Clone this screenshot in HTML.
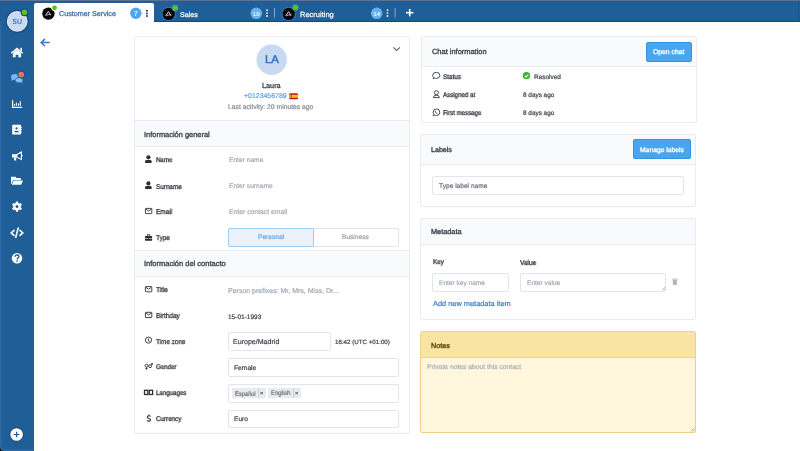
<!DOCTYPE html>
<html><head><meta charset="utf-8">
<style>
*{box-sizing:border-box;margin:0;padding:0}
html,body{width:800px;height:451px;overflow:hidden;background:#fff;font-family:"Liberation Sans",sans-serif}
.a{position:absolute}
.t{position:absolute;white-space:nowrap;line-height:1;text-rendering:geometricPrecision;will-change:transform}
#root{position:absolute;left:0;top:0;width:800px;height:451px;overflow:hidden;filter:blur(0.35px)}
</style></head><body><div id="root">
<div class="a" style="left:0px;top:0px;width:34px;height:451px;background:#1f5e96"></div>
<div class="a" style="left:34px;top:0px;width:766px;height:22px;background:#1f5e96;border-bottom:1px solid #0c4986"></div>
<div class="a" style="left:0px;top:0px;width:800px;height:1px;background:#5d7290"></div>
<div class="a" style="left:798px;top:1px;width:1px;height:21px;background:#19548f"></div>
<svg class="a" style="left:0;top:0" width="34" height="451" viewBox="0 0 34 451">
  <!-- avatar SU -->
  <circle cx="17.2" cy="21.4" r="11.4" fill="#15447a"/>
  <circle cx="17.2" cy="21.4" r="10.4" fill="#e3ecf8"/>
  <circle cx="17.2" cy="21.4" r="9.7" fill="#cddbef"/>
  <text x="17.2" y="23.7" text-anchor="middle" font-family="Liberation Sans" font-size="7.7" font-weight="bold" fill="#427cce" style="text-rendering:geometricPrecision" transform="translate(17.2 0) scale(0.93 1) translate(-17.2 0)">SU</text>
  <circle cx="24.5" cy="12.3" r="3.9" fill="#17487e"/>
  <circle cx="24.5" cy="12.3" r="2.8" fill="#5cc11c"/>
  <!-- home -->
  <g fill="#fff">
    <path d="M10.8 52.8 L17 47.6 L23.2 52.8 L22.3 53.8 L17 49.4 L11.7 53.8 Z"/>
    <rect x="20.4" y="47.8" width="1.6" height="3.2"/>
    <path d="M12.9 53 L17 49.7 L21.1 53 L21.1 57.2 L18.4 57.2 L18.4 54.8 L15.6 54.8 L15.6 57.2 L12.9 57.2 Z"/>
  </g>
  <!-- chat -->
  <g fill="#74b9f5">
    <ellipse cx="14.8" cy="77" rx="3.8" ry="3"/>
    <path d="M11.6 79 L11.1 81 L13.8 79.6 Z"/>
  </g>
  <g fill="#86c3f7" stroke="#1f5e96" stroke-width="0.7">
    <ellipse cx="19.1" cy="80.2" rx="3.9" ry="2.5"/>
  </g>
  <path d="M21.4 82 L22.9 83.4 L20.1 82.6 Z" fill="#86c3f7"/>
  <circle cx="21.2" cy="74.6" r="3.8" fill="#1a5189"/>
  <circle cx="21.2" cy="74.6" r="2.9" fill="#ef6f5b"/>
  <!-- chart -->
  <g fill="#fff">
    <rect x="12" y="100.2" width="1.2" height="7.8"/>
    <rect x="12" y="106.8" width="10.2" height="1.2"/>
    <rect x="14" y="104" width="1.05" height="1.8"/>
    <rect x="15.85" y="102.6" width="1.1" height="3.2"/>
    <rect x="18" y="103.4" width="1.05" height="2.4"/>
    <rect x="19.8" y="101.2" width="1.05" height="4.6"/>
  </g>
  <!-- address book -->
  <g fill="#fff">
    <rect x="12.2" y="124.8" width="8.8" height="9.6" rx="0.6"/>
    <rect x="21" y="126.7" width="1" height="1"/>
    <rect x="21" y="129.1" width="1" height="1"/>
    <rect x="21" y="131.5" width="1" height="1"/>
  </g>
  <circle cx="16.5" cy="128.4" r="1.05" fill="#1b4f8a"/>
  <rect x="14.6" y="130.9" width="4" height="1.4" fill="#1b4f8a"/>
  <!-- megaphone -->
  <g fill="#fff">
    <path d="M12 154.2 L16.4 154.2 L22 151 L22 160.2 L16.4 157.6 L12 157.6 Z"/>
    <path d="M14 157.4 L16.2 157.4 L16.2 160.4 L14.2 160.4 Z"/>
    <rect x="22" y="155" width="0.6" height="1.4"/>
  </g>
  <path d="M17.4 155 L20.8 153.2 L20.8 158.4 L17.4 156.8 Z" fill="#1b4f8a"/>
  <!-- folder -->
  <g fill="#fff">
    <path d="M11 176.8 L15.6 176.8 L16.4 177.9 L20.8 177.9 L20.8 180 L13.2 180 L11.4 184 L11 184 Z"/>
    <path d="M13.6 180.6 L23 180.6 L21.2 184.8 L11.8 184.8 Z"/>
  </g>
  <!-- gear -->
  <g fill="#fff">
    <circle cx="17" cy="206.6" r="3.8"/>
    <g transform="translate(17 206.6)">
      <rect x="-1.2" y="-5.1" width="2.4" height="10.2" rx="0.4"/>
      <rect x="-1.2" y="-5.1" width="2.4" height="10.2" rx="0.4" transform="rotate(60)"/>
      <rect x="-1.2" y="-5.1" width="2.4" height="10.2" rx="0.4" transform="rotate(120)"/>
    </g>
  </g>
  <circle cx="17" cy="206.6" r="1.4" fill="#1b4f8a"/>
  <!-- code -->
  <g fill="none" stroke="#fff" stroke-width="1.6" stroke-linecap="round" stroke-linejoin="miter">
    <path d="M14 230.4 L11.2 232.9 L14 235.4"/>
    <path d="M20 230.4 L22.8 232.9 L20 235.4"/>
    <path d="M18.2 228 L15.8 237.2"/>
  </g>
  <!-- question -->
  <circle cx="17" cy="258.2" r="5.2" fill="#fff"/>
  <path d="M15.1 256.8 Q15.2 254.8 17.1 254.8 Q19 254.9 18.9 256.6 Q18.8 257.6 17.8 258 Q17.2 258.3 17.2 259.4" fill="none" stroke="#1b4f8a" stroke-width="1.3"/>
  <circle cx="17.1" cy="261.1" r="0.8" fill="#1b4f8a"/>
  <!-- plus circle -->
  <circle cx="16.6" cy="434.5" r="7.2" fill="#17487e"/>
  <circle cx="16.6" cy="434.5" r="6.3" fill="#fff"/>
  <g stroke="#1f5e96" stroke-width="1.2">
    <line x1="13.8" y1="434.5" x2="19.4" y2="434.5"/>
    <line x1="16.6" y1="431.7" x2="16.6" y2="437.3"/>
  </g>
  <!-- window corner -->
  <path d="M0 446.5 L0 451 L4.5 451 Q0.4 450.8 0 446.5 Z" fill="#1e1a17"/>
  <path d="M0.9 22 L0.9 446.5 Q0.9 450 4.4 450 L34 450" fill="none" stroke="#3673b2" stroke-width="0.9"/>
</svg>

<div class="a" style="left:34px;top:3px;width:120px;height:20px;background:#fff;border-radius:2px 2px 0 0"></div>
<svg class="a" style="left:34px;top:0" width="400" height="22" viewBox="34 0 400 22">
  <defs>
    <g id="logo">
      <circle cx="0" cy="0" r="6.2" fill="#050505"/>
      <path d="M-3 1.9 L-0.1 -2.3 L2.3 1.5" fill="none" stroke="#d6d6d6" stroke-width="1"/>
      <path d="M-2.4 1.8 Q0 0.4 2.6 1.1" fill="none" stroke="#d6d6d6" stroke-width="0.8"/>
    </g>
  </defs>
  <!-- tab1 -->
  
  <use href="#logo" x="48.4" y="13.6"/>
  <circle cx="54.5" cy="7.8" r="3.3" fill="#fff"/>
  <circle cx="54.5" cy="7.8" r="2.4" fill="#5bc21d"/>
  <circle cx="135.85" cy="13.3" r="5.7" fill="#4fa7f1"/>
  <text x="135.9" y="15.9" text-anchor="middle" font-family="Liberation Sans" font-size="6.6" fill="#eef6fe" stroke="#eef6fe" stroke-width="0.2">7</text>
  <g fill="#0f2c6c"><circle cx="146.9" cy="10.7" r="0.95"/><circle cx="146.9" cy="13.4" r="0.95"/><circle cx="146.9" cy="16" r="0.95"/></g>
  <!-- tab2 -->
  <circle cx="168.7" cy="14" r="7.1" fill="#3d80c6"/>
  <use href="#logo" x="168.7" y="14"/>
  <circle cx="175.1" cy="8" r="3.4" fill="#3d80c6"/>
  <circle cx="175.1" cy="8" r="2.6" fill="#5bc21d"/>
  <circle cx="256.3" cy="13.3" r="5.8" fill="#64b2f2"/>
  <text x="256.3" y="15.6" text-anchor="middle" font-family="Liberation Sans" font-size="6.2" fill="#eef6fe" stroke="#eef6fe" stroke-width="0.15">10</text>
  <g fill="#fff"><circle cx="267" cy="10.2" r="0.9"/><circle cx="267" cy="13.1" r="0.9"/><circle cx="267" cy="16" r="0.9"/></g>
  <rect x="274" y="8" width="0.9" height="9.5" fill="#8fb0d4"/>
  <!-- tab3 -->
  <circle cx="288.7" cy="14" r="7.1" fill="#3d80c6"/>
  <use href="#logo" x="288.7" y="14"/>
  <circle cx="295.5" cy="7.6" r="3.4" fill="#3d80c6"/>
  <circle cx="295.5" cy="7.6" r="2.6" fill="#5bc21d"/>
  <circle cx="376.7" cy="13.3" r="5.8" fill="#64b2f2"/>
  <text x="376.7" y="15.6" text-anchor="middle" font-family="Liberation Sans" font-size="6.2" fill="#eef6fe" stroke="#eef6fe" stroke-width="0.15">14</text>
  <g fill="#fff"><circle cx="387.5" cy="10.2" r="0.9"/><circle cx="387.5" cy="13.1" r="0.9"/><circle cx="387.5" cy="16" r="0.9"/></g>
  <rect x="394.6" y="8" width="0.9" height="9.5" fill="#8fb0d4"/>
  <!-- plus -->
  <g stroke="#fff" stroke-width="1.6"><line x1="406" y1="12.7" x2="413.4" y2="12.7"/><line x1="409.7" y1="9" x2="409.7" y2="16.4"/></g>
</svg>
<svg class="a" style="left:38px;top:36px" width="14" height="14" viewBox="38 36 14 14">
  <g fill="none" stroke="#3b79c9" stroke-width="1.5" stroke-linecap="round" stroke-linejoin="round">
    <path d="M49.2 42.6 L41.4 42.6"/><path d="M44.5 39.4 L41.3 42.6 L44.5 45.8"/>
  </g>
</svg>
<div class="t" style="left:59.00px;top:11.43px;font-size:7.17px;-webkit-text-stroke:0.25px #3a6aa4;color:#3a6aa4;">Customer Service</div>
<div class="t" style="left:179.50px;top:11.99px;font-size:7.1px;-webkit-text-stroke:0.25px #f4f8fc;color:#f4f8fc;">Sales</div>
<div class="t" style="left:300.20px;top:11.35px;font-size:7.5px;-webkit-text-stroke:0.25px #f4f8fc;color:#f4f8fc;">Recruiting</div>
<div class="a" style="left:134px;top:36px;width:276px;height:398px;border:1px solid #e8ebf0;border-radius:2px;background:#fff"></div>
<svg class="a" style="left:134px;top:36px" width="276" height="398" viewBox="134 36 276 398">
  <circle cx="271.7" cy="59.8" r="15.2" fill="#c8daf2"/>
  <path d="M393.3 47.3 L396.6 50.5 L399.9 47.3" fill="none" stroke="#5b6370" stroke-width="1.1"/>
  <!-- flag -->
  <rect x="289.3" y="93.3" width="8.6" height="6" rx="0.6" fill="#c8102e"/>
  <rect x="289.3" y="94.8" width="8.6" height="3" fill="#f7c600"/>
  <rect x="290.7" y="95.2" width="1.3" height="2.1" fill="#b5541b"/>
</svg>
<svg class="a" style="left:134px;top:140px" width="30" height="290" viewBox="134 140 30 290">
  <g fill="#2b3037">
    <circle cx="148.4" cy="157.3" r="2.1"/>
    <path d="M145.1 162.9 L145.1 161.2 Q145.1 159.9 146.5 159.9 L150.3 159.9 Q151.6 159.9 151.6 161.2 L151.6 162.9 Z"/>
    <circle cx="148.4" cy="183.4" r="2.1"/>
    <path d="M145.1 189 L145.1 187.3 Q145.1 186 146.5 186 L150.3 186 Q151.6 186 151.6 187.3 L151.6 189 Z"/>
    <!-- briefcase -->
    <rect x="145" y="236" width="7.1" height="4.7" rx="0.5"/>
  </g>
  <rect x="147.3" y="234.7" width="2.5" height="1.6" fill="none" stroke="#2b3037" stroke-width="0.75"/>
  <rect x="145" y="238" width="7.1" height="0.55" fill="#fff"/>
  <rect x="148.15" y="237.7" width="0.8" height="1.2" fill="#2b3037"/>
  <g fill="none" stroke="#2b3037" stroke-width="0.9">
    <rect x="145.4" y="208.4" width="6.4" height="5.2" rx="0.5"/>
    <path d="M145.9 209.1 L148.6 211.1 L151.3 209.1"/>
    <rect x="145.4" y="286.6" width="6.4" height="5.2" rx="0.5"/>
    <path d="M145.9 287.3 L148.6 289.3 L151.3 287.3"/>
    <rect x="145.4" y="312.3" width="6.4" height="5.2" rx="0.5"/>
    <path d="M145.9 313 L148.6 315 L151.3 313"/>
    <!-- clock -->
    <circle cx="148.5" cy="340.1" r="3.1" stroke-width="0.9"/>
    <path d="M148.4 338.6 L148.4 340.9 L149.8 341.6" stroke-width="0.9"/>
    <!-- gender -->
    <circle cx="146.5" cy="365.7" r="1.5" stroke-width="0.9"/>
    <path d="M146.5 367.2 L146.5 369.6 M145.4 368.6 L147.6 368.6" stroke-width="0.9"/>
    <circle cx="150.1" cy="366.2" r="1.45" stroke-width="0.9"/>
    <path d="M151.1 365.2 L152.4 363.6 M151.1 363.5 L152.5 363.5 L152.5 364.9" stroke-width="0.8"/>
    <!-- languages -->
    <rect x="144.5" y="390.3" width="3.3" height="4.2" stroke-width="1.3"/>
    <rect x="149.3" y="390.3" width="3.3" height="4.2" stroke-width="1.3"/>
    <!-- dollar -->
    <path d="M150.6 416.4 Q150 415.7 148.8 415.7 Q147.3 415.7 147.3 417 Q147.3 418 148.9 418.4 Q150.6 418.8 150.6 419.9 Q150.6 421 148.9 421 Q147.6 421 147 420.3" stroke-width="1.05"/>
    <path d="M148.9 414.4 L148.9 415.7 M148.9 421 L148.9 422" stroke-width="0.9"/>
  </g>
</svg>

<div class="t" style="left:265.00px;top:55.15px;font-size:11.4px;-webkit-text-stroke:0.5px #3470c2;color:#3470c2;">LA</div>
<div class="t" style="left:262.30px;top:81.72px;font-size:7.3px;-webkit-text-stroke:0.26px #30353b;color:#30353b;">Laura</div>
<div class="t" style="left:244.00px;top:93.92px;font-size:6.95px;-webkit-text-stroke:0.2px #5aa2e5;color:#5aa2e5;">+0123456789</div>
<div class="t" style="left:227.50px;top:104.86px;font-size:6.78px;-webkit-text-stroke:0.2px #858b94;color:#858b94;">Last activity: 20 minutes ago</div>
<div class="a" style="left:134px;top:120px;width:276px;height:27px;background:#f9fafc;border:1px solid #e8ebf0"></div>
<div class="a" style="left:134px;top:250px;width:276px;height:27px;background:#f9fafc;border:1px solid #e8ebf0"></div>
<div class="t" style="left:144.00px;top:130.89px;font-size:7.45px;-webkit-text-stroke:0.36px #41464d;color:#41464d;">Información general</div>
<div class="t" style="left:144.00px;top:260.25px;font-size:7.5px;-webkit-text-stroke:0.36px #41464d;color:#41464d;">Información del contacto</div>
<div class="t" style="left:155.60px;top:157.87px;font-size:6.765px;-webkit-text-stroke:0.3px #30353c;color:#30353c;transform:scaleX(0.9091);transform-origin:0 0;">Name</div>
<div class="t" style="left:155.60px;top:183.84px;font-size:7.04px;-webkit-text-stroke:0.3px #30353c;color:#30353c;transform:scaleX(0.9091);transform-origin:0 0;">Surname</div>
<div class="t" style="left:155.60px;top:209.35px;font-size:7.15px;-webkit-text-stroke:0.3px #30353c;color:#30353c;transform:scaleX(0.9091);transform-origin:0 0;">Email</div>
<div class="t" style="left:155.60px;top:234.54px;font-size:7.04px;-webkit-text-stroke:0.3px #30353c;color:#30353c;transform:scaleX(0.9091);transform-origin:0 0;">Type</div>
<div class="t" style="left:155.60px;top:286.74px;font-size:7.04px;-webkit-text-stroke:0.3px #30353c;color:#30353c;transform:scaleX(0.9091);transform-origin:0 0;">Title</div>
<div class="t" style="left:155.60px;top:313.35px;font-size:7.15px;-webkit-text-stroke:0.3px #30353c;color:#30353c;transform:scaleX(0.9091);transform-origin:0 0;">Birthday</div>
<div class="t" style="left:155.60px;top:338.87px;font-size:7.007px;-webkit-text-stroke:0.3px #30353c;color:#30353c;transform:scaleX(0.9091);transform-origin:0 0;">Time zone</div>
<div class="t" style="left:155.60px;top:365.47px;font-size:6.765px;-webkit-text-stroke:0.3px #30353c;color:#30353c;transform:scaleX(0.9091);transform-origin:0 0;">Gender</div>
<div class="t" style="left:155.60px;top:391.16px;font-size:6.776px;-webkit-text-stroke:0.3px #30353c;color:#30353c;transform:scaleX(0.9091);transform-origin:0 0;">Languages</div>
<div class="t" style="left:155.60px;top:416.75px;font-size:6.908px;-webkit-text-stroke:0.3px #30353c;color:#30353c;transform:scaleX(0.9091);transform-origin:0 0;">Currency</div>
<div class="t" style="left:228.60px;top:157.97px;font-size:6.65px;-webkit-text-stroke:0.2px #a3aab4;color:#a3aab4;">Enter name</div>
<div class="t" style="left:228.60px;top:184.24px;font-size:6.68px;-webkit-text-stroke:0.2px #a3aab4;color:#a3aab4;">Enter surname</div>
<div class="t" style="left:228.60px;top:209.73px;font-size:6.82px;-webkit-text-stroke:0.2px #a3aab4;color:#a3aab4;">Enter contact email</div>
<div class="a" style="left:228px;top:228px;width:171px;height:19px;border:1px solid #e2e5e9;border-radius:2px;background:#fff"></div>
<div class="a" style="left:228px;top:228px;width:86px;height:19px;border:1px solid #9dccf1;border-radius:2px;background:#eaf3fc"></div>
<div class="t" style="left:258.00px;top:235.01px;font-size:6.6px;-webkit-text-stroke:0.2px #62a6e6;color:#62a6e6;">Personal</div>
<div class="t" style="left:342.30px;top:235.01px;font-size:6.6px;-webkit-text-stroke:0.2px #9ba1a9;color:#9ba1a9;">Business</div>
<div class="t" style="left:227.80px;top:288.27px;font-size:7.0px;-webkit-text-stroke:0.2px #a3aab4;color:#a3aab4;">Person prefixes: Mr, Mrs, Miss, Dr...</div>
<div class="t" style="left:227.80px;top:314.80px;font-size:6.5px;-webkit-text-stroke:0.2px #3d4249;color:#3d4249;">15-01-1993</div>
<div class="a" style="left:228px;top:332px;width:103px;height:19px;border:1px solid #e3e6ea;border-radius:2px;background:#fff"></div>
<div class="t" style="left:233.30px;top:338.61px;font-size:7.07px;-webkit-text-stroke:0.2px #3d4249;color:#3d4249;">Europe/Madrid</div>
<div class="t" style="left:334.50px;top:340.15px;font-size:6.2px;-webkit-text-stroke:0.2px #3d4249;color:#3d4249;">16:42 (UTC +01:00)</div>
<div class="a" style="left:228px;top:358px;width:171px;height:19px;border:1px solid #e3e6ea;border-radius:2px;background:#fff"></div>
<div class="t" style="left:234.10px;top:365.73px;font-size:6.7px;-webkit-text-stroke:0.2px #3d4249;color:#3d4249;">Female</div>
<div class="a" style="left:228px;top:384px;width:171px;height:19px;border:1px solid #e3e6ea;border-radius:2px;background:#fff"></div>
<div class="a" style="left:232px;top:388px;width:34px;height:10px;background:#e8eaed;border-radius:1px"></div>
<div class="a" style="left:258.2px;top:388px;width:0.8px;height:10px;background:#cdd1d6"></div>
<div class="a" style="left:268px;top:388px;width:33px;height:10px;background:#e8eaed;border-radius:1px"></div>
<div class="a" style="left:293.2px;top:388px;width:0.8px;height:10px;background:#cdd1d6"></div>
<div class="t" style="left:234.60px;top:391.59px;font-size:6.384px;-webkit-text-stroke:0.08px #50565d;color:#50565d;transform:scaleX(0.8929);transform-origin:0 0;">Español</div>
<div class="t" style="left:270.60px;top:391.41px;font-size:6.608px;-webkit-text-stroke:0.08px #50565d;color:#50565d;transform:scaleX(0.8929);transform-origin:0 0;">English</div>
<div class="t" style="left:260.30px;top:392.06px;font-size:5.6px;font-weight:bold;color:#3d4249;">×</div>
<div class="t" style="left:295.30px;top:392.06px;font-size:5.6px;font-weight:bold;color:#3d4249;">×</div>
<div class="a" style="left:228px;top:410px;width:171px;height:18px;border:1px solid #e3e6ea;border-radius:2px;background:#fff"></div>
<div class="t" style="left:234.10px;top:417.21px;font-size:6.6px;-webkit-text-stroke:0.2px #3d4249;color:#3d4249;">Euro</div>
<div class="a" style="left:421px;top:36px;width:276px;height:87px;border:1px solid #e8ebf0;border-radius:2px;background:#fff"></div>
<div class="a" style="left:422px;top:37px;width:274px;height:30px;background:#f9fafc;border-bottom:1px solid #e8ebf0"></div>
<div class="a" style="left:646px;top:42px;width:45.5px;height:19.5px;background:#49a6ee;border:1px solid #3593e3;border-radius:2px"></div>
<div class="t" style="left:652.90px;top:49.74px;font-size:6.8px;-webkit-text-stroke:0.3px #ffffff;color:#ffffff;">Open chat</div>
<div class="t" style="left:432.20px;top:48.29px;font-size:7.45px;-webkit-text-stroke:0.36px #3f444b;color:#3f444b;">Chat information</div>
<div class="t" style="left:443.40px;top:75.03px;font-size:6.93px;-webkit-text-stroke:0.3px #30353c;color:#30353c;transform:scaleX(0.9091);transform-origin:0 0;">Status</div>
<div class="t" style="left:443.40px;top:93.06px;font-size:6.776px;-webkit-text-stroke:0.3px #30353c;color:#30353c;transform:scaleX(0.9091);transform-origin:0 0;">Assigned at</div>
<div class="t" style="left:443.40px;top:111.29px;font-size:6.743px;-webkit-text-stroke:0.3px #30353c;color:#30353c;transform:scaleX(0.9091);transform-origin:0 0;">First message</div>
<div class="t" style="left:534.40px;top:75.44px;font-size:6.45px;-webkit-text-stroke:0.2px #3d4249;color:#3d4249;">Resolved</div>
<div class="t" style="left:522.90px;top:93.38px;font-size:6.4px;-webkit-text-stroke:0.2px #3d4249;color:#3d4249;">8 days ago</div>
<div class="t" style="left:522.90px;top:110.58px;font-size:6.4px;-webkit-text-stroke:0.2px #3d4249;color:#3d4249;">8 days ago</div>
<div class="a" style="left:420px;top:134px;width:276px;height:73px;border:1px solid #e8ebf0;border-radius:2px;background:#fff"></div>
<div class="a" style="left:421px;top:135px;width:274px;height:30px;background:#f9fafc;border-bottom:1px solid #e8ebf0"></div>
<div class="a" style="left:633px;top:139px;width:57.5px;height:20px;background:#49a6ee;border:1px solid #3593e3;border-radius:2px"></div>
<div class="t" style="left:639.60px;top:147.88px;font-size:6.76px;-webkit-text-stroke:0.3px #ffffff;color:#ffffff;">Manage labels</div>
<div class="t" style="left:431.40px;top:146.59px;font-size:7.1px;-webkit-text-stroke:0.36px #3f444b;color:#3f444b;">Labels</div>
<div class="a" style="left:432px;top:176px;width:252px;height:19px;border:1px solid #e3e6ea;border-radius:2px;background:#fff"></div>
<div class="t" style="left:439.00px;top:184.21px;font-size:6.6px;-webkit-text-stroke:0.2px #6b7179;color:#6b7179;">Type label name</div>
<div class="a" style="left:420px;top:218px;width:276px;height:102px;border:1px solid #e8ebf0;border-radius:2px;background:#fff"></div>
<div class="a" style="left:421px;top:219px;width:274px;height:26px;background:#f9fafc;border-bottom:1px solid #e8ebf0"></div>
<div class="t" style="left:430.60px;top:228.39px;font-size:7.34px;-webkit-text-stroke:0.36px #3f444b;color:#3f444b;">Metadata</div>
<div class="t" style="left:432.90px;top:259.93px;font-size:6.93px;-webkit-text-stroke:0.3px #30353c;color:#30353c;transform:scaleX(0.9091);transform-origin:0 0;">Key</div>
<div class="t" style="left:520.10px;top:259.75px;font-size:7.15px;-webkit-text-stroke:0.3px #30353c;color:#30353c;transform:scaleX(0.9091);transform-origin:0 0;">Value</div>
<div class="a" style="left:432px;top:273px;width:77px;height:19px;border:1px solid #e3e6ea;border-radius:2px;background:#fff"></div>
<div class="t" style="left:438.70px;top:280.94px;font-size:6.57px;-webkit-text-stroke:0.2px #a3aab4;color:#a3aab4;">Enter key name</div>
<div class="a" style="left:520px;top:273px;width:146px;height:19px;border:1px solid #e3e6ea;border-radius:2px;background:#fff"></div>
<div class="t" style="left:526.70px;top:280.93px;font-size:6.58px;-webkit-text-stroke:0.2px #a3aab4;color:#a3aab4;">Enter value</div>
<div class="t" style="left:432.90px;top:299.83px;font-size:7.4px;-webkit-text-stroke:0.2px #3b7bc8;color:#3b7bc8;">Add new metadata item</div>
<div class="a" style="left:420px;top:331px;width:276px;height:102px;border:1px solid #ebd189;border-radius:2px;background:#fff6dc;overflow:hidden"></div>
<div class="a" style="left:421px;top:332px;width:274px;height:26px;background:#f9e3a5;border-bottom:1px solid #eed28a"></div>
<div class="t" style="left:430.70px;top:341.50px;font-size:7.2px;-webkit-text-stroke:0.38px #654a0c;color:#654a0c;">Notes</div>
<div class="t" style="left:427.00px;top:364.78px;font-size:6.75px;-webkit-text-stroke:0.2px #a7afba;color:#a7afba;">Private notes about this contact</div>
<svg class="a" style="left:430px;top:68px" width="110" height="52" viewBox="430 68 110 52">
  <g fill="none" stroke="#3d424a" stroke-width="0.95">
    <path d="M433.6 77.6 Q432.7 76.6 432.7 75.4 Q432.7 72.3 436.3 72.3 Q439.8 72.3 439.8 75.4 Q439.8 78.4 436.3 78.4 Q435.2 78.4 434.4 78 L433 78.7 Z" stroke-linejoin="round"/>
    <circle cx="436.4" cy="92.7" r="2"/>
    <path d="M433.4 97.6 Q433.4 95.2 436.4 95.2 Q439.4 95.2 439.4 97.6 Z" stroke-linejoin="round"/>
    <path d="M433.9 114.4 Q433.2 113.4 433.2 112.2 Q433.2 108.9 436.5 108.9 Q439.8 108.9 439.8 112.2 Q439.8 115.5 436.5 115.5 Q435.4 115.5 434.6 115 L433 115.7 Z" stroke-linejoin="round"/>
  </g>
  <path d="M435.2 110.8 Q434.9 112.6 437.4 113.8" fill="none" stroke="#3d424a" stroke-width="0.9"/>
  <circle cx="526.45" cy="75.6" r="3.7" fill="#3cb62a"/>
  <path d="M524.8 75.9 L526.1 77.1 L528.3 74.7" fill="none" stroke="#fff" stroke-width="1.05"/>
</svg>
<svg class="a" style="left:655px;top:270px" width="30" height="25" viewBox="655 270 30 25">
  <path d="M662 290.2 L665 287.2 M663.8 290.4 L665.2 289" stroke="#80858c" stroke-width="0.6"/>
  <g fill="#b2b6bc">
    <rect x="672" y="278.7" width="5.8" height="0.9"/>
    <path d="M672.7 280 L677.1 280 L676.8 285.1 L673 285.1 Z"/>
  </g>
</svg>
<svg class="a" style="left:685px;top:424px" width="12" height="10" viewBox="685 424 12 10">
  <path d="M690.8 431.4 L694.6 427.6 M692.4 431.6 L694.8 429.2" stroke="#9a9a9a" stroke-width="0.6"/>
</svg>
</div></body></html>
